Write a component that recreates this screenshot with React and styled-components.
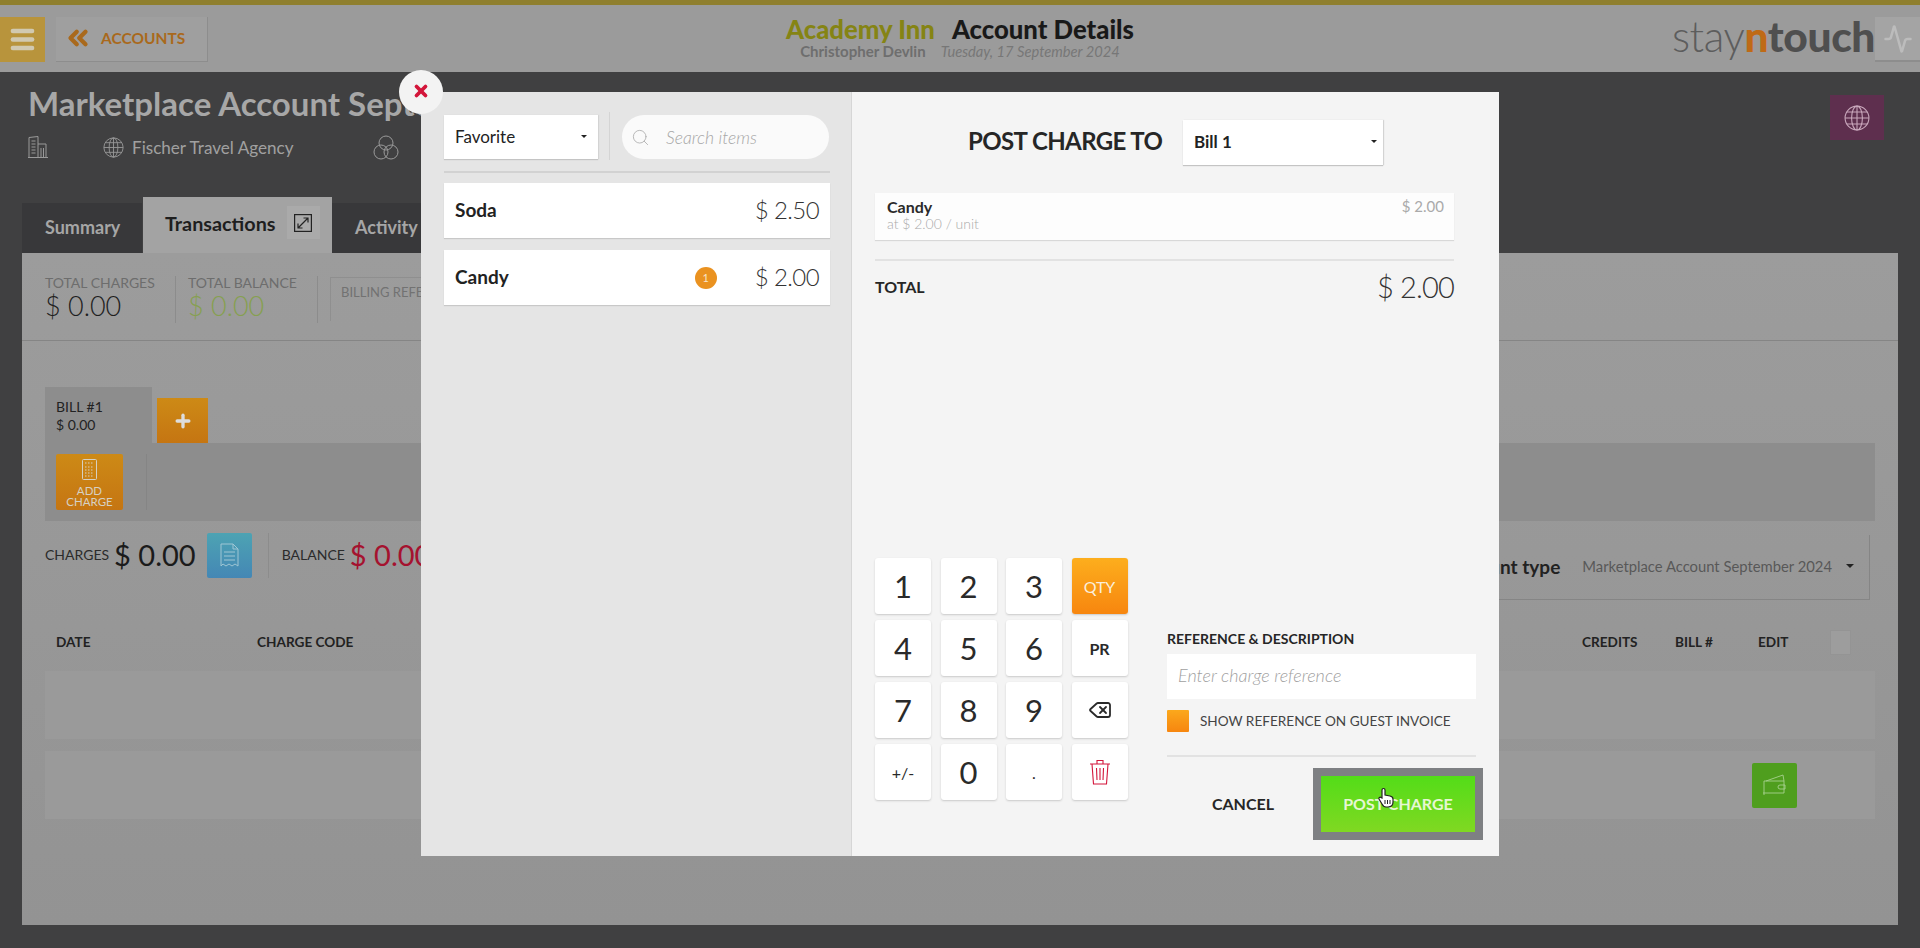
import React from "react";
import styled, { createGlobalStyle } from "styled-components";
import { Menu, ChevronsLeft, Activity, Delete, Search, Plus, X } from "lucide-react";

const Global = createGlobalStyle`
  html, body { margin: 0; padding: 0; width: 1920px; height: 948px; overflow: hidden; background: #404041; }
  * { box-sizing: border-box; }
  body { font-family: Lato, "Noto Sans", sans-serif; color: #1f1f1f; }
`;

const Page = styled.div`
  width: 1920px; height: 948px; display: flex; flex-direction: column; background: #404041;
`;
const TopLine = styled.div`height: 5px; background: #8f7f2e;`;
const Header = styled.header`
  height: 67px; background: #9b9b9b; display: grid; grid-template-columns: 1fr auto 1fr; align-items: start; padding-top: 12px;
`;
const HeaderLeft = styled.div`display: flex; gap: 11px;`;
const Burger = styled.div`
  width: 45px; height: 45px; background: #b8943c; color: #d1c9b0; display: flex; align-items: center; justify-content: center;
`;
const BackButton = styled.div`
  width: 152px; height: 45px; border-right: 1px solid #8d8d8d; border-bottom: 1px solid #8d8d8d; background: #9f9f9f;
  display: flex; align-items: center; padding: 0 0 2px 7px; gap: 8px; color: #a9691c; font-size: 15.5px; font-weight: 700;
`;
const HeaderCenter = styled.div`display: flex; flex-direction: column; align-items: center; margin-top: -2px;`;
const HeaderTitle = styled.div`display: flex; gap: 17px; font-size: 25.7px; font-weight: 900; line-height: 28px;`;
const HotelName = styled.span`color: #858414;`;
const PageName = styled.span`color: #191919;`;
const HeaderSub = styled.div`display: flex; gap: 15px; font-size: 15px; line-height: 16px; color: #6e6e6e; font-weight: 700;`;
const DateText = styled.span`font-weight: 400; font-style: italic; font-size: 14.7px; color: #777;`;
const HeaderRight = styled.div`display: flex; justify-content: flex-end; align-items: flex-start;`;
const Logo = styled.div`font-size: 42.5px; line-height: 38px; letter-spacing: -0.4px; color: #5d5d5d; font-weight: 300;`;
const LogoN = styled.span`color: #bf6a16; font-weight: 900;`;
const LogoTouch = styled.span`color: #4f4f4f; font-weight: 900;`;
const PulseButton = styled.div`
  width: 45px; height: 45px; background: #a4a4a4; border-bottom: 2px solid #8d8d8d; color: #bcbcbc;
  display: flex; align-items: center; justify-content: center;
`;

const Body = styled.main`flex: 1; padding: 0 22px; display: flex; flex-direction: column;`;
const Head = styled.div`height: 125px; display: flex; justify-content: space-between; padding: 0 14px 0 6px;`;
const TitleText = styled.h1`margin: 10px 0 0; font-size: 33px; line-height: 42px; font-weight: 700; color: #a7a7a7; white-space: nowrap;`;
const Meta = styled.div`display: flex; align-items: center; height: 28px; margin-top: 9px; color: #a0a0a0; font-size: 17.1px;`;
const MetaIcon = styled.span`display: inline-flex; margin-left: ${p => p.$ml || 0}px; margin-right: ${p => p.$mr || 0}px; color: #9a9a9a;`;
const GlobeButton = styled.div`
  width: 54px; height: 45px; margin-top: 23px; background: #5e2f4e; color: #c9a8bc; display: flex; align-items: center; justify-content: center;
`;
const Tabs = styled.div`display: flex; align-items: flex-end; height: 56px;`;
const Tab = styled.div`
  height: ${p => p.$active ? 56 : 50}px; width: ${p => p.$w}px; margin-right: ${p => p.$active ? 0 : 1}px;
  background: ${p => p.$active ? "#a3a3a3" : "#38383a"}; color: ${p => p.$active ? "#1e1e1e" : "#a6a6a6"};
  font-size: ${p => p.$active ? 19.8 : 18}px; font-weight: 700; display: flex; align-items: center; padding: 0 0 ${p => p.$active ? 5 : 3}px ${p => p.$active ? 22 : 23}px; white-space: nowrap;
`;
const ExpandBox = styled.span`
  width: 33px; height: 33px; margin-left: 11px; background: #aaa; display: inline-flex; align-items: center; justify-content: center; color: #222;
`;
const Panel = styled.section`
  height: 672px; background: linear-gradient(#9c9c9c, #939393); display: flex; flex-direction: column; overflow: hidden;
`;
const Stats = styled.div`height: 88px; border-bottom: 1px solid #858585; padding: 23px 23px 0; display: flex; flex-shrink: 0;`;
const Stat = styled.div`
  width: ${p => p.$w}px; height: 47px; border-right: 1px solid #8c8c8c; margin-right: 12px; padding-right: 8px;
`;
const StatLabel = styled.div`font-size: 14px; line-height: 14px; color: #6d6d6d; white-space: nowrap;`;
const StatValue = styled.div`font-size: 27px; line-height: 31px; font-weight: 300; color: ${p => p.$c || "#1f1f1f"}; white-space: nowrap;`;
const BillingBox = styled.div`
  width: 300px; height: 44px; border: 1px solid #8f8f8f; border-bottom: 0; padding: 6px 10px; font-size: 13px; color: #727272; margin-top: 1px; white-space: nowrap;
`;
const BillTabs = styled.div`display: flex; align-items: flex-end; gap: 5px; padding: 46px 23px 0; flex-shrink: 0;`;
const BillTab = styled.div`width: 107px; height: 56px; background: #8d8d8d; padding: 11px 11px; font-size: 14px; line-height: 18px; color: #222;`;
const AddBill = styled.div`
  width: 51px; height: 45px; background: linear-gradient(#cd8a16, #c57512); color: #ddd; display: flex; align-items: center; justify-content: center;
`;
const Band = styled.div`
  margin: 0 23px; height: 78px; background: #8d8d8d; padding: 11px; display: flex; flex-shrink: 0;
`;
const AddCharge = styled.div`
  width: 67px; height: 56px; background: linear-gradient(#cd8a16, #c57512); border-radius: 2px; color: #d6d0c2;
  display: flex; flex-direction: column; align-items: center; padding-top: 5px;
`;
const AddChargeText = styled.span`font-size: 11.5px; line-height: 11px; text-align: center; margin-top: 5px;`;
const BandDivider = styled.div`width: 1px; height: 56px; margin-left: 23px; background: #858585;`;
const Totals = styled.div`
  height: 79px; margin: 0 23px; display: flex; justify-content: space-between; padding-top: 12px; flex-shrink: 0; padding-right: 5px;
`;
const TotalsLeft = styled.div`display: flex; align-items: center; height: 45px;`;
const TotalLabel = styled.span`font-size: 14px; color: #2b2b2b; margin: 0 5px 2px 0;`;
const TotalValue = styled.span`font-size: 29px; font-weight: 400; color: ${p => p.$c || "#1b1b1b"}; margin: 0 11px 3px 0; white-space: nowrap;`;
const ReceiptButton = styled.div`
  width: 45px; height: 45px; background: linear-gradient(#4da3b3, #4487b5); border-radius: 2px; color: #9fc6d4;
  display: flex; align-items: center; justify-content: center; margin-right: 16px;
`;
const VDivider = styled.div`width: 1px; height: 45px; background: #8c8c8c; margin-right: 13px;`;
const AccountType = styled.div`
  height: 65px; margin-top: 2px; border-right: 1px solid #858585; border-bottom: 1px solid #858585; display: flex; align-items: center; padding: 0 15px 2px 0;
`;
const TypeLabel = styled.span`font-size: 19px; font-weight: 700; color: #222; margin-right: 22px; white-space: nowrap;`;
const TypeValue = styled.span`font-size: 14.8px; color: #585858; margin-right: 14px; white-space: nowrap;`;
const Caret = styled.span`
  display: inline-block; width: 0; height: 0; border-left: ${p => p.$s || 4}px solid transparent; border-right: ${p => p.$s || 4}px solid transparent;
  border-top: ${p => p.$s || 4}px solid ${p => p.$c || "#222"};
`;
const TableHead = styled.div`
  height: 71px; margin: 0 23px; display: grid; grid-template-columns: 201px 1fr 93px 83px 90px 27px; align-items: center; padding: 13px 0 0 11px;
  font-size: 13.6px; font-weight: 700; color: #222; flex-shrink: 0;
`;
const HeadCheck = styled.div`width: 21px; height: 25px; margin-left: -18px; background: #9d9d9d; border: 1px solid #949494;`;
const Row = styled.div`
  height: 68px; margin: 0 23px 12px; background: #9a9a9a; display: flex; justify-content: flex-end; align-items: center; padding-right: 78px; flex-shrink: 0;
`;
const WalletButton = styled.div`
  width: 45px; height: 45px; background: #4f9e1e; border-radius: 2px; color: #a7d08e; display: flex; align-items: center; justify-content: center;
`;

const Modal = styled.div`
  position: fixed; left: 421px; top: 92px; width: 1078px; height: 764px; display: flex; border-radius: 2px;
`;
const CloseButton = styled.div`
  position: absolute; left: -22px; top: -22px; width: 44px; height: 44px; border-radius: 50%; background: #f3f3f3; color: #d3153a;
  display: flex; align-items: center; justify-content: center; padding-bottom: 2px; z-index: 2;
`;
const LeftPane = styled.div`
  width: 431px; background: #e5e5e5; border-right: 1px solid #d6d6d6; padding: 23px 21px 0 23px;
`;
const Toolbar = styled.div`display: flex; height: 44px;`;
const FilterSelect = styled.div`
  width: 154px; height: 44px; background: #fff; box-shadow: 0 1px 1px #c4c4c4, 1px 0 1px #d6d6d6; display: flex; align-items: center; justify-content: space-between;
  padding: 0 11px 2px; font-size: 17px; color: #222;
`;
const ToolDivider = styled.div`width: 1px; height: 48px; margin: -3px 12px 0 11px; background: #d4d4d4;`;
const SearchBox = styled.div`
  width: 207px; height: 44px; border-radius: 22px; background: #fafafa; display: flex; align-items: center; padding: 1px 0 0 9px; gap: 16px;
  color: #a7a7a7; font-size: 17.6px; font-style: italic; font-weight: 300;
`;
const Rule = styled.div`height: 2px; background: ${p => p.$c || "#d2d2d2"}; margin: ${p => p.$m || "0"};`;
const Item = styled.div`
  height: 55px; background: #fff; box-shadow: 0 1px 1px #c8c8c8; margin-bottom: 12px; display: flex; align-items: center; padding: 0 11px 3px; width: 386px;
`;
const ItemName = styled.span`font-size: 19px; font-weight: 700; color: #222; flex: 1;`;
const Badge = styled.span`
  width: 22px; height: 22px; border-radius: 50%; background: #ea9220; color: #f8e4c8; font-size: 11px; display: flex; align-items: center; justify-content: center; margin: 3px 38px 0 0;
`;
const ItemPrice = styled.span`font-size: 24px; letter-spacing: -0.6px; font-weight: 300; color: #333; margin-top: 1px;`;

const RightPane = styled.div`
  flex: 1; background: #f4f4f4; padding: 28px 16px 16px 23px; display: flex; flex-direction: column;
`;
const PostRow = styled.div`display: flex; align-items: center; margin-left: 93px; gap: 12px;`;
const PostTitle = styled.div`font-size: 24px; letter-spacing: -0.6px; font-weight: 700; color: #262626; white-space: nowrap; width: 203px; padding-bottom: 4px;`;
const BillSelect = styled.div`
  width: 200px; height: 45px; background: #fff; box-shadow: 0 1px 1px #c4c4c4, 1px 0 1px #d6d6d6; display: flex; align-items: center; justify-content: space-between;
  padding: 0 6px 2px 11px; font-size: 17px; font-weight: 700; color: #222;
`;
const Line = styled.div`
  height: 47px; margin: 28px 29px 0 0; background: #fdfdfd; box-shadow: 0 1px 1px #d8d8d8; display: flex; justify-content: space-between; padding: 6px 10px 0 12px;
`;
const LineName = styled.div`font-size: 16px; line-height: 15px; font-weight: 700; color: #2a2a2a;`;
const LineSub = styled.div`font-size: 14px; line-height: 19px; color: #aaa; font-weight: 300;`;
const LinePrice = styled.div`font-size: 15px; line-height: 15px; color: #aaa;`;
const TotalRow = styled.div`display: flex; justify-content: space-between; align-items: center; height: 50px; margin: 0 29px 0 0;`;
const TotalText = styled.span`font-size: 16px; font-weight: 700; color: #262626;`;
const TotalAmount = styled.span`font-size: 29px; letter-spacing: -0.8px; font-weight: 300; color: #333;`;
const Bottom = styled.div`margin-top: auto; display: flex; justify-content: space-between; align-items: flex-end;`;
const Keypad = styled.div`
  display: grid; grid-template-columns: repeat(4, 56px); grid-auto-rows: 56px; column-gap: 9.5px; row-gap: 6px; margin: 0 0 40px 0;
`;
const Key = styled.div`
  border-radius: 3px; background: ${p => p.$primary ? "linear-gradient(#fdae1d, #f7860f)" : "#fff"}; box-shadow: 0 1px 2px #c9c9c9;
  display: flex; align-items: center; justify-content: center; padding-bottom: ${p => p.$small ? 0 : 1}px;
  color: ${p => p.$primary ? "#fbeedb" : p.$danger ? "#d3153a" : "#2a2a2a"};
  font-size: ${p => p.$small ? 16 : 31}px; font-weight: ${p => p.$bold ? 700 : 400};
`;
const RefColumn = styled.div`width: 316px; display: flex; flex-direction: column;`;
const RefLabel = styled.div`font-size: 14px; line-height: 18px; font-weight: 700; color: #262626;`;
const RefInput = styled.div`
  width: 309px; height: 45px; margin-top: 6px; background: #fff; padding: 0 11px 3px; display: flex; align-items: center; color: #9f9f9f; font-size: 18px; font-style: italic; font-weight: 300;
`;
const CheckRow = styled.div`display: flex; align-items: center; gap: 11px; margin-top: 11px; height: 22px; font-size: 13.6px; color: #444; white-space: nowrap;`;
const CheckBox = styled.div`width: 22px; height: 22px; border-radius: 1px; background: linear-gradient(#fba81c, #f7860f);`;
const Actions = styled.div`display: flex; align-items: center; justify-content: flex-end; gap: 39px;`;
const Cancel = styled.div`font-size: 16px; font-weight: 700; color: #262626; padding-bottom: 2px;`;
const PostButton = styled.div`
  position: relative; width: 170px; height: 72px; border: 8px solid #7e8083; background: linear-gradient(#53dd18, #80d822);
  color: #e6f7d4; font-size: 16px; font-weight: 700; display: flex; align-items: center; justify-content: center; padding-bottom: 2px; white-space: nowrap;
`;
const Cursor = styled.svg`position: absolute; left: 56px; top: 11px;`;

const GlobeIcon = ({ size }) => (
  <svg width={size} height={size} viewBox="0 0 24 24" fill="none" stroke="currentColor" strokeWidth="1">
    <circle cx="12" cy="12" r="11" />
    <ellipse cx="12" cy="12" rx="5" ry="11" />
    <path d="M12 1v22M1 12h22M2.5 6.5h19M2.5 17.5h19" />
  </svg>
);
const BuildingIcon = () => (
  <svg width="20" height="22" viewBox="0 0 20 22" fill="none" stroke="currentColor" strokeWidth="1">
    <path d="M1 21.5V1.5l9 -1V21.5M10 8h8v13.5M0 21.5h20M3.5 5h4M3.5 8h4M3.5 11h4M3.5 14h4M3.5 17h4M13 12v9M15.5 12v9" />
  </svg>
);
const VennIcon = () => (
  <svg width="26" height="25" viewBox="0 0 26 25" fill="none" stroke="currentColor" strokeWidth="1">
    <circle cx="13" cy="8" r="7" />
    <circle cx="8" cy="17" r="7" />
    <circle cx="18" cy="17" r="7" />
  </svg>
);
const ExpandIcon = () => (
  <svg width="18" height="18" viewBox="0 0 18 18" fill="none" stroke="currentColor" strokeWidth="1.2">
    <rect x="0.6" y="0.6" width="16.8" height="16.8" />
    <path d="M4 14 14 4M9.5 4H14v4.5M4 9.5V14h4.5" />
  </svg>
);
const CalcIcon = () => (
  <svg width="15" height="21" viewBox="0 0 15 21" fill="none" stroke="currentColor" strokeWidth="1">
    <rect x="0.5" y="0.5" width="14" height="20" rx="1" />
    <path d="M3 4h9M3 8h9M3 11h9M3 14h9M3 17h9" strokeDasharray="1.5 1.5" />
  </svg>
);
const ReceiptIcon = () => (
  <svg width="19" height="25" viewBox="0 0 19 25" fill="none" stroke="currentColor" strokeWidth="1">
    <path d="M1 1h12l5 5v17l-3-2-3 2-3-2-3 2-3-2-2 2zM13 1v5h5M4 9h11M4 13h11M4 17h11" />
  </svg>
);
const WalletIcon = () => (
  <svg width="24" height="24" viewBox="0 0 24 24" fill="none" stroke="currentColor" strokeWidth="0.9">
    <path d="M1 8v14M0 20h21V8H1M3 8l17-6 1 6M17 12h5v4h-5a2 2 0 0 1 0-4z" />
  </svg>
);
const TrashIcon = () => (
  <svg width="22" height="26" viewBox="0 0 22 26" fill="none" stroke="currentColor" strokeWidth="1.1">
    <path d="M1 5h20M8 5V1.5h6V5M3 5l1.5 20h13L19 5M7.5 9l.5 12M11 9v12M14.5 9 14 21" />
  </svg>
);

const keys = ["1", "2", "3", "QTY", "4", "5", "6", "PR", "7", "8", "9", "back", "+/-", "0", ".", "trash"];

function renderKey(k) {
  if (k === "QTY") return <Key key={k} $primary $small>QTY</Key>;
  if (k === "PR") return <Key key={k} $small $bold>PR</Key>;
  if (k === "back") return <Key key={k}><Delete size={24} strokeWidth={1.8} /></Key>;
  if (k === "trash") return <Key key={k} $danger><TrashIcon /></Key>;
  if (k === "+/-") return <Key key={k} $small>+/-</Key>;
  if (k === ".") return <Key key={k} $small>.</Key>;
  return <Key key={k}>{k}</Key>;
}

export default function App() {
  return (
    <Page>
      <Global />
      <TopLine />
      <Header>
        <HeaderLeft>
          <Burger><Menu size={29} strokeWidth={3.6} /></Burger>
          <BackButton><ChevronsLeft size={30} strokeWidth={3.4} />ACCOUNTS</BackButton>
        </HeaderLeft>
        <HeaderCenter>
          <HeaderTitle><HotelName>Academy Inn</HotelName><PageName>Account Details</PageName></HeaderTitle>
          <HeaderSub><span>Christopher Devlin</span><DateText>Tuesday, 17 September 2024</DateText></HeaderSub>
        </HeaderCenter>
        <HeaderRight>
          <Logo>stay<LogoN>n</LogoN><LogoTouch>touch</LogoTouch></Logo>
          <PulseButton><Activity size={30} strokeWidth={2} /></PulseButton>
        </HeaderRight>
      </Header>
      <Body>
        <Head>
          <div>
            <TitleText>Marketplace Account September 2024</TitleText>
            <Meta>
              <MetaIcon $mr={55}><BuildingIcon /></MetaIcon>
              <MetaIcon $mr={8}><GlobeIcon size={21} /></MetaIcon>
              Fischer Travel Agency
              <MetaIcon $ml={79}><VennIcon /></MetaIcon>
            </Meta>
          </div>
          <GlobeButton><GlobeIcon size={26} /></GlobeButton>
        </Head>
        <Tabs>
          <Tab $w={120}>Summary</Tab>
          <Tab $active $w={189}>Transactions<ExpandBox><ExpandIcon /></ExpandBox></Tab>
          <Tab $w={200}>Activity Log</Tab>
        </Tabs>
        <Panel>
          <Stats>
            <Stat $w={131}><StatLabel>TOTAL CHARGES</StatLabel><StatValue>$ 0.00</StatValue></Stat>
            <Stat $w={130}><StatLabel>TOTAL BALANCE</StatLabel><StatValue $c="#86a050">$ 0.00</StatValue></Stat>
            <BillingBox>BILLING REFERENCE</BillingBox>
          </Stats>
          <BillTabs>
            <BillTab>BILL #1<br />$ 0.00</BillTab>
            <AddBill><Plus size={20} strokeWidth={4} /></AddBill>
          </BillTabs>
          <Band>
            <AddCharge><CalcIcon /><AddChargeText>ADD<br />CHARGE</AddChargeText></AddCharge>
            <BandDivider />
          </Band>
          <Totals>
            <TotalsLeft>
              <TotalLabel>CHARGES</TotalLabel>
              <TotalValue>$ 0.00</TotalValue>
              <ReceiptButton><ReceiptIcon /></ReceiptButton>
              <VDivider />
              <TotalLabel>BALANCE</TotalLabel>
              <TotalValue $c="#a5122f">$ 0.00</TotalValue>
            </TotalsLeft>
            <AccountType>
              <TypeLabel>Account type</TypeLabel>
              <TypeValue>Marketplace Account September 2024</TypeValue>
              <Caret $s={4} />
            </AccountType>
          </Totals>
          <TableHead>
            <span>DATE</span><span>CHARGE CODE</span><span>CREDITS</span><span>BILL #</span><span>EDIT</span><HeadCheck />
          </TableHead>
          <Row />
          <Row><WalletButton><WalletIcon /></WalletButton></Row>
        </Panel>
      </Body>
      <Modal>
        <CloseButton><X size={18} strokeWidth={5} /></CloseButton>
        <LeftPane>
          <Toolbar>
            <FilterSelect>Favorite<Caret $s={3} /></FilterSelect>
            <ToolDivider />
            <SearchBox><Search size={19} strokeWidth={1} />Search items</SearchBox>
          </Toolbar>
          <Rule $m="12px 0 10px" />
          <Item><ItemName>Soda</ItemName><ItemPrice>$ 2.50</ItemPrice></Item>
          <Item><ItemName>Candy</ItemName><Badge>1</Badge><ItemPrice>$ 2.00</ItemPrice></Item>
        </LeftPane>
        <RightPane>
          <PostRow>
            <PostTitle>POST CHARGE TO</PostTitle>
            <BillSelect>Bill 1<Caret $s={3} /></BillSelect>
          </PostRow>
          <Line>
            <div><LineName>Candy</LineName><LineSub>at $ 2.00 / unit</LineSub></div>
            <LinePrice>$ 2.00</LinePrice>
          </Line>
          <Rule $c="#e2e2e2" $m="19px 29px 0 0" />
          <TotalRow><TotalText>TOTAL</TotalText><TotalAmount>$ 2.00</TotalAmount></TotalRow>
          <Bottom>
            <Keypad>{keys.map(renderKey)}</Keypad>
            <RefColumn>
              <RefLabel>REFERENCE &amp; DESCRIPTION</RefLabel>
              <RefInput>Enter charge reference</RefInput>
              <CheckRow><CheckBox />SHOW REFERENCE ON GUEST INVOICE</CheckRow>
              <Rule $c="#e2e2e2" $m="23px 7px 11px 0" />
              <Actions>
                <Cancel>CANCEL</Cancel>
                <PostButton>
                  POST CHARGE
                  <Cursor width="18" height="22" viewBox="0 0 18 22">
                    <path d="M5 11V3a1.5 1.5 0 0 1 3 0v5l5 1c2 .5 3 1.5 3 3v3c0 3-2 5-5 5H9c-2 0-3-1-4-3l-3-5c-.5-1 1-2.5 2-1.5z" fill="#fff" stroke="#222" strokeWidth="1.2" />
                    <path d="M8 13v4M10.5 13v4M13 13v4" stroke="#222" strokeWidth="1" />
                  </Cursor>
                </PostButton>
              </Actions>
            </RefColumn>
          </Bottom>
        </RightPane>
      </Modal>
    </Page>
  );
}
